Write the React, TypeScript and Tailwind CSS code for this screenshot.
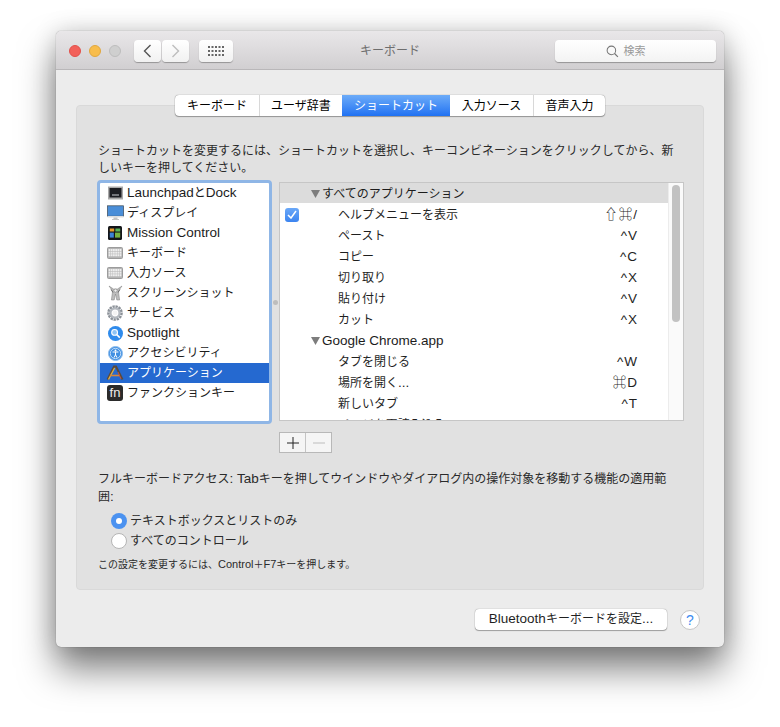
import React from 'react';

const tabs = [
  { label: 'キーボード', w: 'w-[84px]' },
  { label: 'ユーザ辞書', w: 'w-[83px]' },
  { label: 'ショートカット', w: 'w-[108px]', active: true },
  { label: '入力ソース', w: 'w-[83px]' },
  { label: '音声入力', w: 'w-[72px]' },
];

const KeyboardIcon = () => (
  <svg width="16" height="12" viewBox="0 0 16 12">
    <rect x="0.5" y="0.5" width="15" height="11" rx="1" fill="#b5b5b5" stroke="#9c9c9c" />
    {[2, 4.6, 7.2].map((y) => (
      <g key={y}>
        {[1.6, 3.8, 6, 8.2, 10.4, 12.6].map((x) => (
          <rect key={x} x={x} y={y} width="1.8" height="2.1" fill="#ededed" />
        ))}
      </g>
    ))}
  </svg>
);

const icons: Record<string, React.ReactNode> = {
  launchpad: (
    <svg width="15" height="14" viewBox="0 0 15 14">
      <rect x="0" y="0.5" width="15" height="13" fill="#a9a9a9" />
      <rect x="1.5" y="2" width="12" height="9.5" fill="#1c1d22" />
      <rect x="4" y="8.5" width="7" height="1" fill="#c9cdd2" />
    </svg>
  ),
  display: (
    <svg width="17" height="16" viewBox="0 0 17 16">
      <rect x="0.4" y="0.8" width="16.2" height="10.4" fill="#4a8ed8" stroke="#3f4a55" strokeWidth="0.7" />
      <rect x="0.5" y="11" width="16" height="1.5" fill="#dedede" />
      <path d="M6.5 12.5h4v1.6h1.5v.8H5v-.8h1.5z" fill="#c6c6c6" />
    </svg>
  ),
  mission: (
    <svg width="14" height="14" viewBox="0 0 14 14">
      <rect width="14" height="14" rx="1.5" fill="#14161a" />
      <rect x="1.8" y="2.5" width="4.4" height="3" fill="#e59a2d" />
      <rect x="7.4" y="2.5" width="4.8" height="3" fill="#57b45a" />
      <rect x="1.8" y="6.6" width="4" height="5" fill="#3c82d8" />
      <rect x="7" y="6.6" width="5.2" height="5" fill="#76b23f" />
    </svg>
  ),
  keyboard: <KeyboardIcon />,
  screenshot: (
    <svg width="15" height="16" viewBox="0 0 15 16">
      <path d="M1 1l3.6 5L3.4 15h2.8L7.5 9l1.3 6h2.8L10.4 6 14 1 9.5 4h-4z" fill="#bdbdbd" stroke="#7d7d7d" strokeWidth="0.5" />
      <path d="M3 4.5l2 3M12 4.5l-2 3" stroke="#555" strokeWidth="0.8" />
      <circle cx="7.5" cy="5.6" r="1.6" fill="#f2f2f2" stroke="#777" strokeWidth="0.5" />
    </svg>
  ),
  services: (
    <svg width="16" height="16" viewBox="0 0 16 16">
      <circle cx="8" cy="8" r="6" fill="none" stroke="#8b9198" strokeWidth="3.6" strokeDasharray="2.1 0.7" />
      <circle cx="8" cy="8" r="4.6" fill="none" stroke="#b4b9bf" strokeWidth="2.4" />
      <circle cx="8" cy="8" r="2.4" fill="#f4f4f4" />
    </svg>
  ),
  spotlight: (
    <svg width="15" height="15" viewBox="0 0 15 15">
      <circle cx="7.5" cy="7.5" r="7.5" fill="#2f8bec" />
      <circle cx="6.6" cy="6.4" r="2.9" fill="#8cc3f5" stroke="#fff" strokeWidth="1.1" />
      <path d="M8.8 8.6l3 3" stroke="#fff" strokeWidth="1.5" />
    </svg>
  ),
  access: (
    <svg width="15" height="15" viewBox="0 0 15 15">
      <circle cx="7.5" cy="7.5" r="7" fill="#4190e2" stroke="#8fbdec" />
      <circle cx="7.5" cy="7.5" r="5.2" fill="none" stroke="#dcecfb" strokeWidth="0.8" />
      <circle cx="7.5" cy="4.6" r="1" fill="#fff" />
      <path d="M4.6 6h5.8M7.5 6v3M7.5 8.8l-1.5 2.8M7.5 8.8l1.5 2.8" stroke="#fff" strokeWidth="1" fill="none" />
    </svg>
  ),
  apps: (
    <svg width="18" height="16" viewBox="0 0 18 16">
      <path d="M1.5 14.5L8 1.5h2l6.5 13" fill="none" stroke="#5a4a3d" strokeWidth="2" />
      <path d="M2.5 14.5L8.6 3" fill="none" stroke="#e9b23c" strokeWidth="1.3" />
      <path d="M4 10.5h10" stroke="#d8873a" strokeWidth="1.6" />
      <path d="M12 7l3 7" stroke="#c9543f" strokeWidth="1" />
    </svg>
  ),
};

const categories = [
  { icon: 'launchpad', label: 'LaunchpadとDock' },
  { icon: 'display', label: 'ディスプレイ' },
  { icon: 'mission', label: 'Mission Control' },
  { icon: 'keyboard', label: 'キーボード' },
  { icon: 'keyboard', label: '入力ソース' },
  { icon: 'screenshot', label: 'スクリーンショット' },
  { icon: 'services', label: 'サービス' },
  { icon: 'spotlight', label: 'Spotlight' },
  { icon: 'access', label: 'アクセシビリティ' },
  { icon: 'apps', label: 'アプリケーション', selected: true },
  { icon: 'fn', label: 'ファンクションキー' },
];

const shortcuts = [
  { group: true, shaded: true, label: 'すべてのアプリケーション' },
  { label: 'ヘルプメニューを表示', keys: '⇧⌘/', checked: true },
  { label: 'ペースト', keys: '^V' },
  { label: 'コピー', keys: '^C' },
  { label: '切り取り', keys: '^X' },
  { label: '貼り付け', keys: '^V' },
  { label: 'カット', keys: '^X' },
  { group: true, label: 'Google Chrome.app' },
  { label: 'タブを閉じる', keys: '^W' },
  { label: '場所を開く...', keys: '⌘D' },
  { label: '新しいタブ', keys: '^T' },
  { label: 'ページを再読み込み', keys: '^R' },
];

// the latin runs are set a bit larger than the kana, like the original system font
const Mixed = ({ text, small }: { text: string; small?: boolean }) => (
  <>
    {text.split(/([A-Za-z0-9 .:]+)/).map((part, i) =>
      i % 2 === 1 ? (
        <span key={i} className={small ? 'text-[11px]' : 'text-[13.5px]'}>
          {part}
        </span>
      ) : (
        part
      ),
    )}
  </>
);

const Triangle = () => (
  <svg width="9" height="8" viewBox="0 0 9 8" className="mr-[2px] shrink-0">
    <path d="M0 0h9L4.5 8z" fill="#7d7d7d" />
  </svg>
);

export default function App() {
  return (
    <div className="w-[780px] h-[727px] bg-white overflow-hidden pt-[31px] pl-[56px] text-[12px] text-[#222] font-['Liberation_Sans','Noto_Sans_CJK_JP',sans-serif]">
      <div className="w-[668px] h-[616px] rounded-[5px] bg-[#ececec] shadow-[0_0_1px_rgba(0,0,0,0.5),0_22px_36px_rgba(0,0,0,0.5),0_0_24px_rgba(0,0,0,0.16)] overflow-hidden flex flex-col">
        {/* title bar */}
        <div className="h-[39px] shrink-0 pt-[2px] grid grid-cols-[1fr_auto_1fr] items-center px-[8px] border-b border-[#b9b7b9] bg-gradient-to-b from-[#e9e7e9] to-[#d1cfd1]">
          <div className="flex items-center">
            <div className="flex items-center gap-[8px] ml-[5px]">
              <span className="w-[12px] h-[12px] rounded-full bg-[#f2605a] border border-[#e2504a]" />
              <span className="w-[12px] h-[12px] rounded-full bg-[#f8bd4c] border border-[#e1a73e]" />
              <span className="w-[12px] h-[12px] rounded-full bg-[#cfcfcf] border border-[#bdbdbd]" />
            </div>
            <div className="flex ml-[13px] gap-[1px]">
              <div className="w-[27px] h-[22px] bg-gradient-to-b from-white to-[#f1f1f1] rounded-[4px] shadow-[0_1px_1px_rgba(0,0,0,0.3)] flex items-center justify-center">
                <svg width="9" height="14" viewBox="0 0 9 14"><path d="M7.5 1L1.5 7l6 6" fill="none" stroke="#555" strokeWidth="1.4" /></svg>
              </div>
              <div className="w-[27px] h-[22px] bg-gradient-to-b from-white to-[#f1f1f1] rounded-[4px] shadow-[0_1px_1px_rgba(0,0,0,0.3)] flex items-center justify-center">
                <svg width="9" height="14" viewBox="0 0 9 14"><path d="M1.5 1l6 6-6 6" fill="none" stroke="#bdbdbd" strokeWidth="1.4" /></svg>
              </div>
            </div>
            <div className="ml-[10px] w-[34px] h-[22px] bg-gradient-to-b from-white to-[#f1f1f1] rounded-[4px] shadow-[0_1px_1px_rgba(0,0,0,0.3)] flex items-center justify-center">
              <svg width="16" height="10" viewBox="0 0 16 10" fill="#666">
                {[0, 4, 8].map((y) =>
                  [0, 3.5, 7, 10.5, 14].map((x) => <rect key={`${x}-${y}`} x={x} y={y} width="2" height="2" />),
                )}
              </svg>
            </div>
          </div>
          <div className="text-[#6e6e6e] text-[12px]">キーボード</div>
          <div className="flex justify-end">
            <div className="w-[161px] h-[22px] pr-[20px] bg-gradient-to-b from-white to-[#f3f3f3] rounded-[4px] shadow-[0_1px_1px_rgba(0,0,0,0.3)] flex items-center justify-center gap-[5px] text-[#9a9a9a] text-[11px]">
              <svg width="13" height="13" viewBox="0 0 14 14"><circle cx="5.8" cy="5.8" r="4.6" fill="none" stroke="#777" strokeWidth="1.1" /><path d="M9.2 9.2l3.6 3.6" stroke="#777" strokeWidth="1.3" /></svg>
              <span>検索</span>
            </div>
          </div>
        </div>

        {/* body */}
        <div className="flex-1 px-[20px] pt-[35px]">
          <div className="w-[628px] h-[485px] rounded-[4px] bg-[#e1e1e1] border border-[#d9d9d9] pl-[21px] pr-[19px]">
            <div className="flex justify-center -mt-[11px] pr-[2px]">
              <div className="flex h-[21px] rounded-[4px] bg-white shadow-[0_0_1px_rgba(0,0,0,0.6),0_1px_1px_rgba(0,0,0,0.3)] overflow-hidden">
                {tabs.map((t, i) => (
                  <div
                    key={t.label}
                    className={`${t.w} flex items-center justify-center text-[12px] leading-none ${
                      t.active ? 'bg-gradient-to-b from-[#6cabf8] to-[#1f71f2] text-white' : 'text-black'
                    } ${i > 0 && !t.active && !tabs[i - 1].active ? 'border-l border-[#d8d8d8]' : ''}`}
                  >
                    {t.label}
                  </div>
                ))}
              </div>
            </div>

            <p className="mt-[27px] leading-[17px] text-[#2a2a2a] whitespace-nowrap">
              ショートカットを変更するには、ショートカットを選択し、キーコンビネーションをクリックしてから、新
              <br />
              しいキーを押してください。
            </p>

            <div className="flex mt-[3px] -ml-[1px]">
              {/* category list */}
              <div className="w-[175px] h-[244px] shrink-0 rounded-[4px] border-[3px] border-[#8fb6e6] bg-white">
                {categories.map((c) => (
                  <div
                    key={c.label}
                    className={`h-[20px] flex items-center pl-[5px] leading-none ${c.selected ? 'bg-[#2569d0] text-white' : 'text-[#1c1c1c]'}`}
                  >
                    <span className="w-[20px] h-[18px] flex items-center justify-center shrink-0">
                      {c.icon === 'fn' ? (
                        <span className="w-[16px] h-[16px] rounded-[3px] bg-[#2b2b2b] text-[#efefef] text-[13px] leading-[15px] text-center">fn</span>
                      ) : (
                        icons[c.icon]
                      )}
                    </span>
                    <span className="ml-[2px]"><Mixed text={c.label} /></span>
                  </div>
                ))}
              </div>

              {/* splitter */}
              <div className="w-[7px] h-[244px] flex items-center justify-center shrink-0">
                <span className="w-[5px] h-[5px] rounded-full bg-[#bdbdbd]" />
              </div>

              {/* shortcut table */}
              <div className="mt-[2px]">
                <div className="w-[405px] h-[239px] border border-[#c6c6c6] bg-white flex overflow-hidden">
                  <div className="w-[388px] shrink-0 overflow-hidden">
                    {shortcuts.map((s) => (
                      <div
                        key={s.label}
                        className={`flex items-center leading-none shrink-0 ${s.shaded ? 'h-[20px] pt-[1px] mb-[1px] bg-[#dcdcdc]' : 'h-[21px]'}`}
                      >
                        {s.group ? (
                          <div className="flex items-center pl-[31px] text-[#1c1c1c]">
                            <Triangle />
                            <span><Mixed text={s.label} /></span>
                          </div>
                        ) : (
                          <>
                            <span className="w-[58px] pl-[5px] shrink-0 flex items-center">
                              {s.checked && (
                                <span className="w-[14px] h-[14px] rounded-[3px] bg-gradient-to-b from-[#6aa8f8] to-[#3b84f0] flex items-center justify-center">
                                  <svg width="10" height="9" viewBox="0 0 10 9"><path d="M1 5l3 3 5-7" fill="none" stroke="#fff" strokeWidth="1.5" /></svg>
                                </span>
                              )}
                            </span>
                            <span className="text-[#1f1f1f]"><Mixed text={s.label} /></span>
                            <span className="ml-auto pr-[30px] text-[13.5px] tracking-[1px] text-[#1f1f1f]">{s.keys}</span>
                          </>
                        )}
                      </div>
                    ))}
                  </div>
                  <div className="flex-1 border-l border-[#ececec] bg-[#fafafa] pl-[3px] pt-[2px]">
                    <div className="w-[8px] h-[137px] rounded-full bg-[#c2c2c2]" />
                  </div>
                </div>
                <div className="mt-[11px] flex w-[53px] h-[21px] border border-[#b8b8b8] bg-[#f5f5f5]">
                  <div className="flex-1 flex items-center justify-center border-r border-[#c4c4c4]">
                    <svg width="12" height="12" viewBox="0 0 12 12"><path d="M6 0v12M0 6h12" stroke="#222" strokeWidth="1" /></svg>
                  </div>
                  <div className="flex-1 flex items-center justify-center">
                    <svg width="12" height="2" viewBox="0 0 12 2"><path d="M0 1h12" stroke="#bdbdbd" strokeWidth="1" /></svg>
                  </div>
                </div>
              </div>
            </div>

            <p className="mt-[17px] leading-[17px] text-[#2a2a2a] whitespace-nowrap">
              <Mixed text="フルキーボードアクセス: Tabキーを押してウインドウやダイアログ内の操作対象を移動する機能の適用範" />
              <br />
              <Mixed text="囲:" />
            </p>

            <div className="mt-[5px] pl-[13px] text-[#2a2a2a]">
              <div className="h-[20px] flex items-center gap-[3px]">
                <span className="w-[16px] h-[16px] rounded-full bg-[#4b92f0] flex items-center justify-center">
                  <span className="w-[6px] h-[6px] rounded-full bg-white" />
                </span>
                テキストボックスとリストのみ
              </div>
              <div className="h-[20px] flex items-center gap-[3px]">
                <span className="w-[16px] h-[16px] rounded-full bg-white border border-[#b5b5b5]" />
                すべてのコントロール
              </div>
            </div>

            <p className="mt-[5px] text-[10px] leading-[16px] text-[#2a2a2a]">
              <Mixed small text="この設定を変更するには、Control＋F7キーを押します。" />
            </p>
          </div>

          <div className="mt-[19px] flex items-center justify-end pr-[4px] gap-[13px]">
            <div className="w-[192px] h-[21px] pb-[1px] rounded-[4px] bg-white shadow-[0_0_1px_rgba(0,0,0,0.5),0_1px_1px_rgba(0,0,0,0.3)] flex items-center justify-center leading-none text-[#1f1f1f]">
              <Mixed text="Bluetoothキーボードを設定..." />
            </div>
            <div className="w-[20px] h-[20px] rounded-full bg-white border border-[#c6c6c6] flex items-center justify-center text-[#3d8bf0] text-[14px] leading-none">
              ?
            </div>
          </div>
        </div>
      </div>
    </div>
  );
}
